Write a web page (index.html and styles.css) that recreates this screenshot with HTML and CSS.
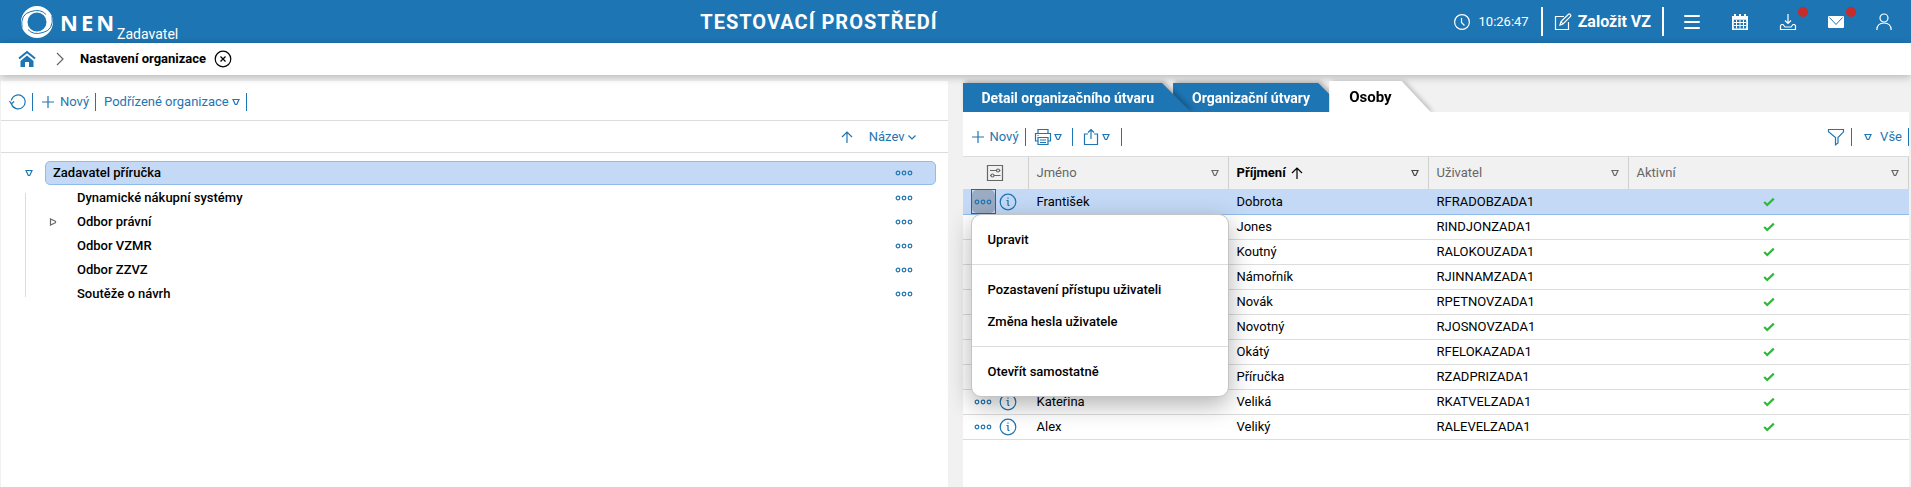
FILE: index.html
```html
<!DOCTYPE html>
<html lang="cs">
<head>
<meta charset="utf-8">
<title>NEN – Nastavení organizace</title>
<link rel="stylesheet" href="styles.css">
</head>
<body>
<svg class="sprite" aria-hidden="true">
  <symbol id="tri-down" viewBox="0 0 8 8"><path d="M1 1.5h6L4.7 6.5H3.3z"/></symbol>
  <symbol id="tri-right" viewBox="0 0 8 8"><path d="M1.5 1v6L6.5 4.7V3.3z"/></symbol>
  <symbol id="dots" viewBox="0 0 18 8"><circle cx="3" cy="4" r="1.8"/><circle cx="9" cy="4" r="1.8"/><circle cx="15" cy="4" r="1.8"/></symbol>
  <symbol id="plus" viewBox="0 0 12 12"><path d="M6 0v12M0 6h12"/></symbol>
  <symbol id="arrow-up" viewBox="0 0 12 12"><path d="M6 12V1M1 6l5-5 5 5"/></symbol>
  <symbol id="info" viewBox="0 0 18 18"><circle cx="9" cy="9" r="7.8"/><path d="M7.5 7.5H9v4.2q0 .9 1.5.8M9 4.6v1.2"/></symbol>
  <symbol id="check" viewBox="0 0 12 10"><path d="M1.2 5l3 3L10.8 1.6"/></symbol>
</svg>

<header class="topbar">
  <div class="brand">
    <svg class="logo" viewBox="0 0 32 32"><path fill="#fff" fill-rule="evenodd" d="M16 0a16 16 0 1 1 0 32a16 16 0 1 1 0-32zM16 6.500a9.500 9.500 0 1 0 0 19a9.500 9.500 0 1 0 0-19z"/><path fill="none" stroke="#1e75b3" stroke-width="1" d="M1 22Q-1 8 10 5.500q10-3 15 3M31 10q2 14-9 16.500q-10 3-15-3"/></svg>
    <span class="brand-name">NEN</span>
    <span class="brand-role">Zadavatel</span>
  </div>
  <h1 class="env">TESTOVACÍ PROSTŘEDÍ</h1>
  <div class="top-tools">
    <span class="clock"><svg class="i16" viewBox="0 0 16 16"><circle cx="8" cy="8" r="7.400"/><path d="M7.500 4v4.500l3 3"/></svg><time>10:26:47</time></span>
    <button class="create"><svg class="i18" viewBox="0 0 18 18"><path d="M10 3.500H1.500v13h13V9M6 12l1-3.500 7.500-7.300q.7-.6 1.500.1l.5.500q.8.800.1 1.500L9 11zM7 8.500L9 11"/></svg>Založit VZ</button>
    <button class="tool" aria-label="Menu"><svg class="i18" viewBox="0 0 18 18"><path stroke-width="2" stroke-linecap="round" d="M2 3h14M2 9h14M2 15h14"/></svg></button>
    <button class="tool" aria-label="Kalendář"><svg class="i18" viewBox="0 0 18 18"><path fill="#fff" stroke="none" fill-rule="evenodd" d="M1 3h2V1h2v2h3V1h2v2h3V1h2v2h2v14H1zM2.800 6.800v8.600h12.400V6.800z"/><path stroke-width="1" d="M3 9.500h12M3 12.500h12M5.500 7v8.500M9 7v8.500M12.500 7v8.500"/></svg></button>
    <button class="tool" aria-label="Stažené soubory"><svg class="i18" viewBox="0 0 18 18"><path d="M9 1v9.500M6 7.500l3 3 3-3M4 11.500H2.500l-1 1v4h15v-4l-1-1H14l-2 2.500H6l-2-2.500z"/></svg><span class="badge"></span></button>
    <button class="tool" aria-label="Zprávy"><svg class="i18" viewBox="0 0 18 18"><rect x="1" y="3" width="16" height="12" rx="1" fill="#fff" stroke="none"/><path stroke="#1e75b3" stroke-width="1" d="M2.500 4.500L9 11.500l6.500-7"/></svg><span class="badge"></span></button>
    <button class="tool" aria-label="Uživatel"><svg class="i18" viewBox="0 0 18 18"><circle cx="9" cy="5" r="4"/><path d="M1.800 17q.2-7 7.200-7t7.200 7"/></svg></button>
  </div>
</header>

<nav class="crumbs">
  <a class="home" href="#" aria-label="Domů"><svg class="i18" viewBox="0 0 18 18"><path fill="currentColor" stroke="none" d="M9 5.500l6.500 5.500V17h-4.500v-5H7v5H2.500v-6z"/><path stroke-width="2" d="M1 8.500L9 2l8 6.500"/></svg></a>
  <svg class="chev" viewBox="0 0 8 14"><path d="M1 1l6 6-6 6"/></svg>
  <span class="crumb">Nastavení organizace</span>
  <button class="close" aria-label="Zavřít"><svg class="i18" viewBox="0 0 18 18"><circle cx="9" cy="9" r="7.800"/><path d="M6.500 6.500l5 5M11.500 6.500l-5 5"/></svg></button>
</nav>

<main class="work">
  <section class="panel">
    <div class="bar left-bar">
      <button class="act reload" aria-label="Obnovit"><svg class="i18" viewBox="0 0 18 18"><path d="M2.500 11A7 7 0 1 0 2.300 7.500M.5 8l1.800 2.800L5.200 8.500"/></svg></button>
      <button class="act"><svg class="i12"><use href="#plus"/></svg>Nový</button>
      <button class="act menu-act">Podřízené organizace<svg class="i8"><use href="#tri-down"/></svg></button>
    </div>
    <div class="sortbar">
      <button class="plain" aria-label="Směr řazení"><svg class="i12"><use href="#arrow-up"/></svg></button>
      <button class="plain sort">Název<svg class="i8" viewBox="0 0 8 8"><path d="M.5 2.500L4 6l3.500-3.500"/></svg></button>
    </div>
    <div class="tree">
      <div class="root">
        <button class="plain twist" aria-label="Sbalit"><svg class="i8"><use href="#tri-down"/></svg></button>
        <div class="node picked"><span>Zadavatel příručka</span><button class="plain" aria-label="Akce"><svg class="dots"><use href="#dots"/></svg></button></div>
      </div>
      <ul class="kids">
        <li class="kid"><span class="twist"></span><span class="label">Dynamické nákupní systémy</span><button class="plain" aria-label="Akce"><svg class="dots"><use href="#dots"/></svg></button></li>
        <li class="kid"><button class="plain twist dim" aria-label="Rozbalit"><svg class="i8"><use href="#tri-right"/></svg></button><span class="label">Odbor právní</span><button class="plain" aria-label="Akce"><svg class="dots"><use href="#dots"/></svg></button></li>
        <li class="kid"><span class="twist"></span><span class="label">Odbor VZMR</span><button class="plain" aria-label="Akce"><svg class="dots"><use href="#dots"/></svg></button></li>
        <li class="kid"><span class="twist"></span><span class="label">Odbor ZZVZ</span><button class="plain" aria-label="Akce"><svg class="dots"><use href="#dots"/></svg></button></li>
        <li class="kid"><span class="twist"></span><span class="label">Soutěže o návrh</span><button class="plain" aria-label="Akce"><svg class="dots"><use href="#dots"/></svg></button></li>
      </ul>
    </div>
  </section>

  <section class="detail">
    <div class="tabs">
      <div class="tab-wrap first"><button class="tab">Detail organizačního útvaru</button></div>
      <div class="tab-wrap"><button class="tab">Organizační útvary</button></div>
      <div class="tab-wrap current"><button class="tab">Osoby</button></div>
    </div>
    <div class="sheet">
      <div class="bar right-bar">
        <button class="act"><svg class="i12"><use href="#plus"/></svg>Nový</button>
        <button class="act print" aria-label="Tisk"><svg class="i18" viewBox="0 0 18 18"><path d="M4 5.500v-4h10v4M4 13H1.500V5.500h15V13H14M4 9.500h10v7H4zM6 12h6M6 14.500h6M3.500 7.500h1"/></svg><svg class="i8"><use href="#tri-down"/></svg></button>
        <button class="act share" aria-label="Export"><svg class="i18" viewBox="0 0 18 18"><path d="M6 6H2.500v10.500h13V6H12M9 11V1.500M6 4.500l3-3 3 3"/></svg><svg class="i8"><use href="#tri-down"/></svg></button>
        <button class="act funnel" aria-label="Filtr"><svg class="i18" viewBox="0 0 18 18"><path d="M1.500 1.500h15v2.300L11 9.500V15l-2.500 1.800V9.500L1.500 3.800z"/></svg></button>
        <button class="act all"><svg class="i8"><use href="#tri-down"/></svg>Vše</button>
      </div>
      <table class="grid">
        <colgroup><col class="c-act"><col class="c-std"><col class="c-std"><col class="c-std"><col></colgroup>
        <thead>
          <tr>
            <th class="conf"><button class="plain dim" aria-label="Nastavení sloupců"><svg class="i18" viewBox="0 0 18 18"><path d="M1.500 1.500h15v15h-15zM4 6.500h6.500M13.500 6.500h1M4 11.500h1M8 11.500h6.500"/><circle cx="12" cy="6.500" r="1.500"/><circle cx="6.500" cy="11.500" r="1.500"/></svg></button></th>
            <th><div class="head">Jméno<svg class="i8"><use href="#tri-down"/></svg></div></th>
            <th class="sorted"><div class="head">Příjmení<svg class="i12"><use href="#arrow-up"/></svg><svg class="i8"><use href="#tri-down"/></svg></div></th>
            <th><div class="head">Uživatel<svg class="i8"><use href="#tri-down"/></svg></div></th>
            <th><div class="head">Aktivní<svg class="i8"><use href="#tri-down"/></svg></div></th>
          </tr>
        </thead>
        <tbody>
          <tr class="on">
            <td class="ops"><div class="pair"><span class="frame"><button class="plain more open" aria-label="Akce"><svg class="dots"><use href="#dots"/></svg></button></span><button class="plain" aria-label="Informace"><svg class="i18"><use href="#info"/></svg></button></div>
              <div class="popup">
                <div class="group"><button class="item">Upravit</button></div>
                <div class="group"><button class="item">Pozastavení přístupu uživateli</button><button class="item">Změna hesla uživatele</button></div>
                <div class="group"><button class="item">Otevřít samostatně</button></div>
              </div>
            </td>
            <td>František</td><td>Dobrota</td><td>RFRADOBZADA1</td><td class="ok"><svg class="tick"><use href="#check"/></svg></td>
          </tr>
          <tr><td></td><td></td><td>Jones</td><td>RINDJONZADA1</td><td class="ok"><svg class="tick"><use href="#check"/></svg></td></tr>
          <tr><td></td><td></td><td>Koutný</td><td>RALOKOUZADA1</td><td class="ok"><svg class="tick"><use href="#check"/></svg></td></tr>
          <tr><td></td><td></td><td>Námořník</td><td>RJINNAMZADA1</td><td class="ok"><svg class="tick"><use href="#check"/></svg></td></tr>
          <tr><td></td><td></td><td>Novák</td><td>RPETNOVZADA1</td><td class="ok"><svg class="tick"><use href="#check"/></svg></td></tr>
          <tr><td></td><td></td><td>Novotný</td><td>RJOSNOVZADA1</td><td class="ok"><svg class="tick"><use href="#check"/></svg></td></tr>
          <tr><td></td><td></td><td>Okátý</td><td>RFELOKAZADA1</td><td class="ok"><svg class="tick"><use href="#check"/></svg></td></tr>
          <tr><td></td><td></td><td>Příručka</td><td>RZADPRIZADA1</td><td class="ok"><svg class="tick"><use href="#check"/></svg></td></tr>
          <tr><td class="ops"><div class="pair"><button class="plain more" aria-label="Akce"><svg class="dots"><use href="#dots"/></svg></button><button class="plain" aria-label="Informace"><svg class="i18"><use href="#info"/></svg></button></div></td><td>Kateřina</td><td>Veliká</td><td>RKATVELZADA1</td><td class="ok"><svg class="tick"><use href="#check"/></svg></td></tr>
          <tr><td class="ops"><div class="pair"><button class="plain more" aria-label="Akce"><svg class="dots"><use href="#dots"/></svg></button><button class="plain" aria-label="Informace"><svg class="i18"><use href="#info"/></svg></button></div></td><td>Alex</td><td>Veliký</td><td>RALEVELZADA1</td><td class="ok"><svg class="tick"><use href="#check"/></svg></td></tr>
        </tbody>
      </table>
    </div>
  </section>
</main>
</body>
</html>
```

FILE: styles.css
```css
:root {
  --blue: #1e75b3;
  --line: #dcdcdc;
  --pick: #c3d9f5;
  --pick-line: #90bbeb;
}
* { box-sizing: border-box; }
body {
  margin: 0;
  min-height: 100vh;
  display: flex;
  flex-direction: column;
  background: #f1f1f1;
  color: #000;
  font: 13px/16px Roboto, "Liberation Sans", sans-serif;
}
button {
  font: inherit;
  color: inherit;
  background: none;
  border: 0;
  padding: 0;
  cursor: pointer;
}
svg { display: block; flex: none; fill: none; stroke: currentColor; stroke-width: 1.2; }
.sprite { display: none; }
.i8 { width: 8px; height: 8px; }
.i12 { width: 12px; height: 12px; }
.i16 { width: 16px; height: 16px; }
.i18 { width: 18px; height: 18px; }
.dots { width: 18px; height: 8px; }
.plain { display: flex; align-items: center; color: var(--blue); }
.plain.dim { color: #666; }

/* top bar */
.topbar {
  display: grid;
  grid-template-columns: 7fr auto 10fr;
  align-items: center;
  height: 43px;
  padding: 0 3px 0 21px;
  background: var(--blue);
  color: #fff;
}
.brand { display: flex; align-items: center; height: 43px; }
.logo { width: 32px; height: 32px; stroke: none; margin-right: 7px; }
.brand-name { font: bold 22px/32px "Open Sans", sans-serif; letter-spacing: 3px; }
.brand-role { align-self: flex-end; font-size: 14px; line-height: 18px; }
.env { margin: 0; font-size: 20px; line-height: 24px; letter-spacing: 1px; }
.top-tools { display: flex; justify-content: flex-end; align-items: center; }
.clock { display: flex; align-items: center; gap: 9px; padding-right: 12px; }
.create {
  display: flex;
  align-items: center;
  gap: 6px;
  height: 29px;
  padding: 0 11px;
  margin-right: 4px;
  border: solid #fff;
  border-width: 0 2px;
  font-size: 16px;
  font-weight: bold;
}
.tool { position: relative; display: grid; place-items: center; width: 48px; height: 43px; }
.badge {
  position: absolute;
  top: 7px;
  right: 4px;
  width: 10px;
  height: 10px;
  border-radius: 50%;
  background: #c92a2a;
}

/* breadcrumbs */
.crumbs {
  position: relative;
  display: flex;
  align-items: center;
  height: 32px;
  padding: 0 18px;
  background: #fff;
  box-shadow: 0 2px 8px rgba(0, 0, 0, .25);
}
.home { color: var(--blue); }
.chev { width: 8px; height: 14px; margin: 0 16px 0 20px; color: #666; }
.crumb { font-weight: bold; }
.close { margin-left: 8px; }

/* work area */
.work {
  flex: 1;
  display: grid;
  grid-template-columns: minmax(0, 1fr) minmax(0, 1fr);
  gap: 15px;
  padding: 6px 2px 0 1px;
}
.panel { background: #fff; }
.bar { display: flex; align-items: center; border-bottom: 1px solid var(--line); color: var(--blue); }
.left-bar { height: 40px; padding: 2px 0 0 8px; }
.act { display: flex; align-items: center; gap: 6px; height: 18px; padding: 0 6px 0 9px; border-right: 1px solid var(--blue); }
.act.reload { padding: 0 5px 0 0; }
.menu-act { gap: 3px; padding: 0 6px 0 8px; }
.sortbar {
  display: flex;
  justify-content: flex-end;
  align-items: center;
  gap: 16px;
  height: 32px;
  padding-right: 32px;
  border-bottom: 1px solid var(--line);
}
.sort { gap: 3px; }
.tree { padding: 8px 12px 0 20px; font-weight: 500; }
.root { display: flex; align-items: center; }
.twist { width: 24px; padding-left: 4px; }
.node {
  flex: 1;
  display: flex;
  align-items: center;
  justify-content: space-between;
  height: 24px;
  padding: 0 22px 0 7px;
  border: 1px solid var(--pick-line);
  border-radius: 5px;
  background: var(--pick);
}
.kids {
  list-style: none;
  margin: 0 0 0 4px;
  padding: 1px 23px 0 20px;
  background: linear-gradient(var(--line), var(--line)) 0 8px / 1px 104px no-repeat;
}
.kid { display: flex; align-items: center; height: 24px; }
.kid .label { flex: 1; padding-left: 8px; }

/* tabs */
.tabs { display: flex; align-items: flex-end; height: 31px; }
.tab-wrap { position: relative; z-index: 1; margin-left: -18px; filter: drop-shadow(2px -2px 2px rgba(0, 0, 0, .25)); }
.tab-wrap.first { z-index: 2; margin-left: 0; }
.tab-wrap.current { z-index: 3; filter: drop-shadow(3px 0 2px rgba(0, 0, 0, .2)); }
.tab {
  display: block;
  height: 29px;
  padding: 0 37px 0 19px;
  background: var(--blue);
  color: #fff;
  font-size: 14px;
  font-weight: bold;
  clip-path: polygon(0 0, calc(100% - 29px) 0, 100% 100%, 0 100%);
}
.current .tab { height: 31px; padding: 0 39px 0 20px; background: #fff; color: #000; font-size: 15px; }

/* people grid */
.sheet { position: relative; z-index: 4; height: calc(100% - 31px); background: #fff; }
.right-bar { height: 45px; padding: 6px 0 0; }
.right-bar .print { gap: 2px; padding: 0 10px 0 8px; }
.right-bar .share { gap: 2px; padding: 0 11px 0 9px; }
.funnel { margin-left: auto; }
.right-bar .funnel { padding: 0 6px; }
.right-bar .all { gap: 8px; padding: 0 6px 0 12px; }
.grid { width: 100%; border-spacing: 0; table-layout: fixed; }
.c-act { width: 66px; }
.c-std { width: 200px; }
.grid th {
  height: 32px;
  padding: 0 9px 0 8px;
  background: #f1f1f1;
  border-right: 1px solid #d0d0d0;
  color: #666;
  font-weight: normal;
  text-align: left;
}
.grid th.conf { padding: 0; }
.grid th.sorted { color: #000; font-weight: bold; }
.grid th.sorted .i8 { color: #444; }
.conf button { margin: 0 auto; }
.head { display: flex; align-items: center; gap: 5px; }
.head .i8 { margin-left: auto; }
.grid td { height: 25px; padding: 0 8px; border-bottom: 1px solid var(--line); }
.grid .on td { height: 26px; background: var(--pick); border-bottom-color: var(--pick-line); }
.grid .ops { position: relative; padding: 0 0 0 8px; }
.pair { display: flex; align-items: center; gap: 3px; height: 24px; }
.on .pair { height: 25px; }
.more { justify-content: center; width: 25px; height: 24px; }
.frame { border: 1px solid #e02020; }
.more.open { width: 23px; height: 23px; border-radius: 5px; background: #9aabc3; }
.tick { width: 12px; height: 10px; margin: 0 auto; color: #2fb83a; stroke-width: 2.2; }
.popup {
  position: absolute;
  top: 25px;
  left: 8px;
  z-index: 5;
  width: 258px;
  border: 1px solid #c4c4c4;
  border-radius: 10px;
  background: #fff;
  box-shadow: 0 8px 24px rgba(0, 0, 0, .3);
}
.group { padding: 9px 0 8px; }
.group + .group { border-top: 1px solid var(--line); }
.item { display: block; width: 100%; height: 32px; padding: 0 16px; text-align: left; font-weight: 500; }
```
